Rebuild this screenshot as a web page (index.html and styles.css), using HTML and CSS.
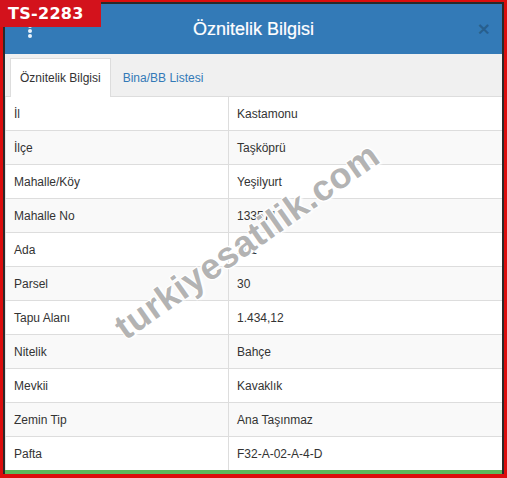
FILE: index.html
```html
<!DOCTYPE html>
<html lang="tr">
<head>
<meta charset="utf-8">
<link rel="stylesheet" href="styles.css">
</head>
<body>
<div class="modal">
  <div class="header">
    <span class="menu"><i></i><i></i><i></i></span>
    <h4 class="title">Öznitelik Bilgisi</h4>
    <span class="close">×</span>
  </div>
  <div class="tabs">
    <span class="tab active">Öznitelik Bilgisi</span>
    <span class="tab">Bina/BB Listesi</span>
  </div>
  <table class="grid">
    <tr><td>İl</td><td>Kastamonu</td></tr>
    <tr><td>İlçe</td><td>Taşköprü</td></tr>
    <tr><td>Mahalle/Köy</td><td>Yeşilyurt</td></tr>
    <tr><td>Mahalle No</td><td>133571</td></tr>
    <tr><td>Ada</td><td>101</td></tr>
    <tr><td>Parsel</td><td>30</td></tr>
    <tr><td>Tapu Alanı</td><td>1.434,12</td></tr>
    <tr><td>Nitelik</td><td>Bahçe</td></tr>
    <tr><td>Mevkii</td><td>Kavaklık</td></tr>
    <tr><td>Zemin Tip</td><td>Ana Taşınmaz</td></tr>
    <tr><td>Pafta</td><td>F32-A-02-A-4-D</td></tr>
  </table>
  <div class="watermark">turkiyesatilik.com</div>
</div>
<div class="badge">TS-2283</div>
</body>
</html>
```
FILE: styles.css
```css
html, body {
  margin: 0;
  padding: 0;
}
body {
  background: #dc0d0d;
  width: 507px;
  height: 478px;
  overflow: hidden;
  position: relative;
  font-family: "Liberation Sans", Arial, sans-serif;
  font-size: 12px;
  color: #333;
}
.modal {
  position: relative;
  margin: 2px 0 0 3px;
  width: 497px;
  border: 2px solid #2a2a2a;
  border-bottom: none;
  background: #fff;
  overflow: hidden;
}
.header {
  height: 50px;
  background: #337ab7;
  display: flex;
  align-items: center;
  justify-content: center;
  position: relative;
}
.title {
  margin: 0;
  color: #fff;
  font-weight: normal;
  font-size: 18px;
  -webkit-text-stroke: 0.2px #fff;
}
.menu {
  position: absolute;
  left: 23px;
  top: 20px;
  display: flex;
  flex-direction: column;
  gap: 1px;
}
.menu i {
  display: block;
  width: 4px;
  height: 4px;
  border-radius: 50%;
  background: #e8f2fb;
}
.close {
  position: absolute;
  right: 12px;
  top: 14px;
  font-size: 21px;
  font-weight: bold;
  color: rgba(0, 0, 0, 0.22);
  line-height: 1;
}
.tabs {
  background: #f0f0f0;
  padding: 4px 0 0 5px;
  height: 38px;
  border-bottom: 1px solid #ddd;
  display: flex;
  align-items: flex-end;
}
.tab {
  height: 37px;
  line-height: 37px;
  padding: 0 11px;
  color: #337ab7;
  border: 1px solid transparent;
  border-bottom: none;
  margin-bottom: -1px;
}
.tab.active {
  background: #fff;
  color: #333;
  padding: 0 9px;
  border-color: #ddd;
  height: 38px;
  line-height: 38px;
}
.grid {
  width: 100%;
  border-collapse: collapse;
  table-layout: fixed;
  border-bottom: 4px solid #5cb85c;
}
.grid td {
  height: 33px;
  padding: 0 8px;
  border: 1px solid #ddd;
  border-top: none;
  vertical-align: middle;
}
.grid tr + tr td {
  border-top: 1px solid #ddd;
}
.grid td:first-child {
  width: 206px;
  border-left: 1px solid #e6e6e6;
}
.grid td:last-child {
  border-right: none;
}
.grid tr:nth-child(even) td {
  background: #f9f9f9;
}
.watermark {
  position: absolute;
  left: 72px;
  top: 216px;
  width: 340px;
  text-align: center;
  font-family: "Liberation Sans", Arial, sans-serif;
  font-weight: bold;
  font-size: 36px;
  letter-spacing: 0.5px;
  color: rgba(165, 165, 165, 0.85);
  text-shadow: 1px 1px 0 #fff, -1px -1px 0 #fff, 1px -1px 0 #fff, -1px 1px 0 #fff, 2px 2px 2px rgba(255,255,255,0.8);
  transform: rotate(-35deg);
  transform-origin: center center;
  pointer-events: none;
}
.badge {
  position: absolute;
  left: 0;
  top: 0;
  width: 101px;
  height: 27px;
  background: #d3121c;
  color: #fff;
  font-family: "DejaVu Sans", Verdana, sans-serif;
  font-weight: bold;
  font-size: 16px;
  line-height: 27px;
  padding-left: 8px;
  box-sizing: border-box;
  letter-spacing: 0.3px;
}
```
